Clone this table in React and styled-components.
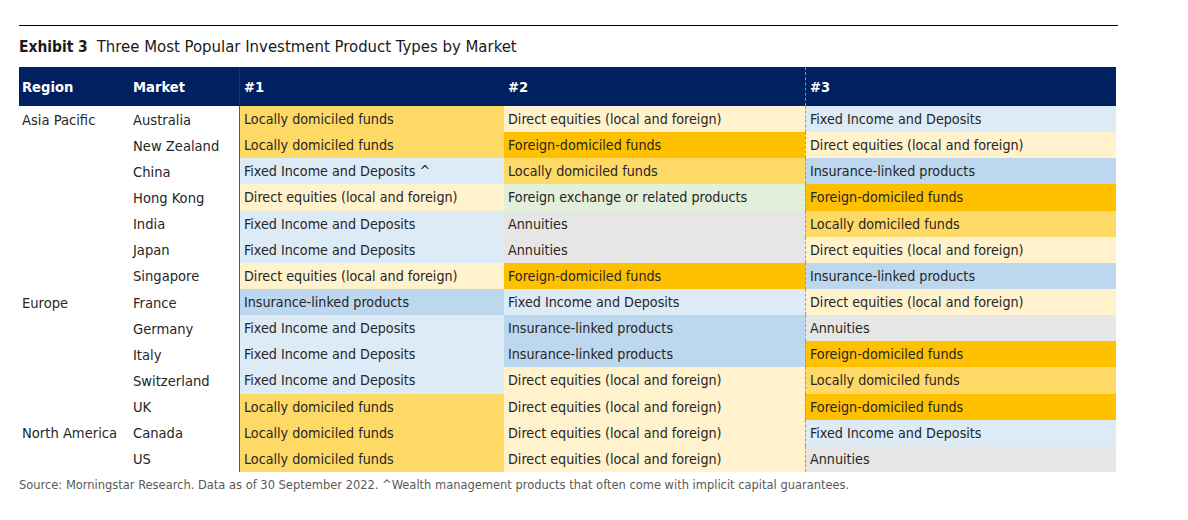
import styled, { createGlobalStyle } from "styled-components";

const GlobalStyle = createGlobalStyle`
  body {
    margin: 0;
    background: #ffffff;
    font-family: "DejaVu Sans Condensed", "Liberation Sans", sans-serif;
  }
`;

const FILLS = {
  local: "#ffd966",
  direct: "#fff2cc",
  foreign: "#ffc000",
  fixed: "#ddebf7",
  insurance: "#bdd7ee",
  annuity: "#e7e6e6",
  fx: "#e2efda",
};

const LABELS = {
  local: "Locally domiciled funds",
  direct: "Direct equities (local and foreign)",
  foreign: "Foreign-domiciled funds",
  fixed: "Fixed Income and Deposits",
  insurance: "Insurance-linked products",
  annuity: "Annuities",
  fx: "Foreign exchange or related products",
};

const ROWS = [
  { region: "Asia Pacific", market: "Australia", picks: ["local", "direct", "fixed"] },
  { market: "New Zealand", picks: ["local", "foreign", "direct"] },
  { market: "China", picks: ["fixed", "local", "insurance"], note: " ^" },
  { market: "Hong Kong", picks: ["direct", "fx", "foreign"] },
  { market: "India", picks: ["fixed", "annuity", "local"] },
  { market: "Japan", picks: ["fixed", "annuity", "direct"] },
  { market: "Singapore", picks: ["direct", "foreign", "insurance"] },
  { region: "Europe", market: "France", picks: ["insurance", "fixed", "direct"] },
  { market: "Germany", picks: ["fixed", "insurance", "annuity"] },
  { market: "Italy", picks: ["fixed", "insurance", "foreign"] },
  { market: "Switzerland", picks: ["fixed", "direct", "local"] },
  { market: "UK", picks: ["local", "direct", "foreign"] },
  { region: "North America", market: "Canada", picks: ["local", "direct", "fixed"] },
  { market: "US", picks: ["local", "direct", "annuity"] },
];

const Page = styled.div`
  padding: 25px 0 0 19px;
  width: 1099px;
`;

const Rule = styled.div`
  border-top: 1px solid #000;
`;

const Title = styled.h1`
  margin: 0;
  padding: 10px 0 0;
  height: 31px;
  font-size: 16.6px;
  font-weight: normal;
  color: #1a1a1a;
  line-height: 22px;
  white-space: nowrap;
`;

const Strong = styled.b`
  font-weight: bold;
  font-size: 15.4px;
  margin-right: 9px;
`;

const Table = styled.div`
  display: grid;
  grid-template-columns: 111px 109px 265px 301px 311px;
  grid-template-rows: 39px repeat(14, 26.15px);
  width: 1097px;
`;

const Head = styled.div`
  background: #002060;
  color: #ffffff;
  font-weight: bold;
  font-size: 14.6px;
  display: flex;
  align-items: center;
  padding-left: ${(p) => (p.$rank ? 4 : 3)}px;
  border-left: ${(p) => (p.$rank === 1 ? "1px solid #1c2f5a" : p.$rank === 3 ? "1px dashed #8a8fa0" : "none")};
`;

const Label = styled.div`
  display: flex;
  align-items: center;
  padding-left: 3px;
  font-size: 14.6px;
  color: #262626;
  white-space: nowrap;
`;

const Cell = styled.div`
  display: flex;
  align-items: center;
  padding-left: 4px;
  font-size: 14.2px;
  color: #262626;
  white-space: nowrap;
  background: ${(p) => FILLS[p.$kind]};
  border-left: ${(p) => (p.$rank === 1 ? "1px solid #595959" : p.$rank === 3 ? "1px dashed #9a9a9a" : "none")};
`;

const Source = styled.p`
  margin: 5px 0 0;
  font-size: 12.75px;
  color: #595959;
  white-space: nowrap;
`;

export default function App() {
  return (
    <>
      <GlobalStyle />
      <Page>
        <Rule />
        <Title>
          <Strong>Exhibit 3</Strong>Three Most Popular Investment Product Types by Market
        </Title>
        <Table>
          <Head>Region</Head>
          <Head>Market</Head>
          <Head $rank={1}>#1</Head>
          <Head $rank={2}>#2</Head>
          <Head $rank={3}>#3</Head>
          {ROWS.map((row) => [
            <Label key={row.market + "-r"}>{row.region || ""}</Label>,
            <Label key={row.market + "-m"}>{row.market}</Label>,
            ...row.picks.map((kind, i) => (
              <Cell key={row.market + i} $kind={kind} $rank={i + 1}>
                {LABELS[kind]}
                {i === 0 && row.note}
              </Cell>
            )),
          ])}
        </Table>
        <Source>
          Source: Morningstar Research. Data as of 30 September 2022. ^Wealth management products that often come with
          implicit capital guarantees.
        </Source>
      </Page>
    </>
  );
}
